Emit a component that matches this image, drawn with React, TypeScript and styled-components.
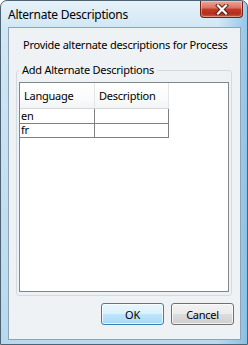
import styled, { createGlobalStyle } from 'styled-components';

const GlobalStyle = createGlobalStyle`
  html, body {
    margin: 0;
    padding: 0;
    background: #ffffff;
  }
  * {
    box-sizing: border-box;
  }
`;

const rows = [{ lang: 'en', desc: '' }, { lang: 'fr', desc: '' }];

const CloseIcon = () => (
  <svg width="14" height="11" viewBox="0 0 14 11">
    <path d="M3 1.5 L11 9.5 M11 1.5 L3 9.5" stroke="#5a1810" strokeWidth="4" strokeLinecap="square" />
    <path d="M3 1.5 L11 9.5 M11 1.5 L3 9.5" stroke="#ffffff" strokeWidth="2.2" strokeLinecap="square" />
  </svg>
);

const App = () => (
  <>
    <GlobalStyle />
    <Window>
      <TitleBar>
        <Title>Alternate Descriptions</Title>
        <CloseButton>
          <CloseIcon />
        </CloseButton>
      </TitleBar>

      <Client>
        <Prompt>Provide alternate descriptions for Process</Prompt>

        <Group>
          <GroupLabel>Add Alternate Descriptions</GroupLabel>
          <Grid>
            <HeaderRow>
              <HeaderCell>Language</HeaderCell>
              <HeaderCell>Description</HeaderCell>
            </HeaderRow>
            {rows.map((row) => (
              <DataRow key={row.lang}>
                <DataCell>{row.lang}</DataCell>
                <DataCell>{row.desc}</DataCell>
              </DataRow>
            ))}
          </Grid>
        </Group>

        <ButtonRow>
          <DialogButton $primary>OK</DialogButton>
          <DialogButton>Cancel</DialogButton>
        </ButtonRow>
      </Client>
    </Window>
  </>
);

export default App;

// --- Styled Components ---
const Window = styled.div`
  width: 248px;
  height: 345px;
  display: flex;
  flex-direction: column;
  border: 1px solid #4d6374;
  border-radius: 7px 7px 0 0;
  background:
    linear-gradient(to right, rgba(255, 255, 255, 0) 88%, rgba(96, 172, 222, 0.55) 100%),
    linear-gradient(to bottom, #e6f2f9 0, #d2e7f4 26px, #c2dff0 60%, #b7d9ee 100%);
  font-family: 'Noto Sans', 'Open Sans', sans-serif;
  font-size: 11px;
  letter-spacing: -0.25px;
  color: #000;
  white-space: nowrap;
  overflow: hidden;
`;

const TitleBar = styled.div`
  height: 26px;
  display: flex;
  align-items: flex-start;
  padding-left: 7px;
  padding-right: 4px;
`;

const Title = styled.div`
  padding-top: 6px;
  line-height: 16px;
  font-size: 12px;
`;

const CloseButton = styled.div`
  margin-left: auto;
  width: 43px;
  height: 17px;
  display: flex;
  align-items: center;
  justify-content: center;
  border: 1px solid #6c2219;
  border-top: none;
  border-radius: 0 0 4px 4px;
  background: linear-gradient(to bottom, #eba99a 0%, #d96e5e 45%, #c23a28 50%, #b52e1b 80%, #cf5d43 100%);
  box-shadow: inset 0 0 0 1px rgba(255, 220, 210, 0.45);
`;

const Client = styled.div`
  flex: 1;
  display: flex;
  flex-direction: column;
  margin: 0 6px 4px 7px;
  border: 1px solid #8ea4b4;
  background: #eff2f4;
  padding-bottom: 14px;
`;

const Prompt = styled.div`
  margin-top: 9px;
  padding-left: 14px;
  line-height: 16px;
`;

const Group = styled.fieldset`
  flex: 1;
  display: flex;
  flex-direction: column;
  margin: 9px 8px 0 7px;
  padding: 4px 2px 3px 2px;
  border: 1px solid #d3dbe1;
  border-radius: 3px;
  min-width: 0;
`;

const GroupLabel = styled.legend`
  padding: 0 3px;
  line-height: 16px;
`;

const Grid = styled.div`
  flex: 1;
  border: 1px solid #7c8790;
  background: #ffffff;
`;

const HeaderRow = styled.div`
  display: grid;
  grid-template-columns: 75px 74px;
  height: 25px;
`;

const HeaderCell = styled.div`
  display: flex;
  align-items: center;
  padding-left: 4px;
  border-right: 1px solid #e3e6e8;
  background: linear-gradient(to bottom, #ffffff 0%, #fafbfb 60%, #f2f3f4 100%);
`;

const DataRow = styled.div`
  display: grid;
  grid-template-columns: 75px 74px;
  width: 149px;
  height: 15px;
  border-top: 1px solid #d6d6d6;
  & + & {
    border-top: none;
  }
`;

const DataCell = styled.div`
  height: 15px;
  padding-left: 1px;
  line-height: 14px;
  border-right: 1px solid #808080;
  border-bottom: 1px solid #808080;
`;

const ButtonRow = styled.div`
  display: flex;
  justify-content: flex-end;
  gap: 7px;
  margin-top: 7px;
  padding-right: 6px;
`;

const DialogButton = styled.div<{ $primary?: boolean }>`
  width: 63px;
  height: 22px;
  display: flex;
  align-items: center;
  justify-content: center;
  border-radius: 3px;
  border: 1px solid ${({ $primary }) => ($primary ? '#3c7fb1' : '#707070')};
  background: ${({ $primary }) =>
    $primary
      ? 'linear-gradient(to bottom, #eaf6fd 0%, #d9f0fc 50%, #bee6fd 51%, #a7d9f5 100%)'
      : 'linear-gradient(to bottom, #f2f2f2 0%, #ebebeb 50%, #dddddd 51%, #cfcfcf 100%)'};
  box-shadow: inset 0 0 0 1px rgba(255, 255, 255, 0.7);
`;
